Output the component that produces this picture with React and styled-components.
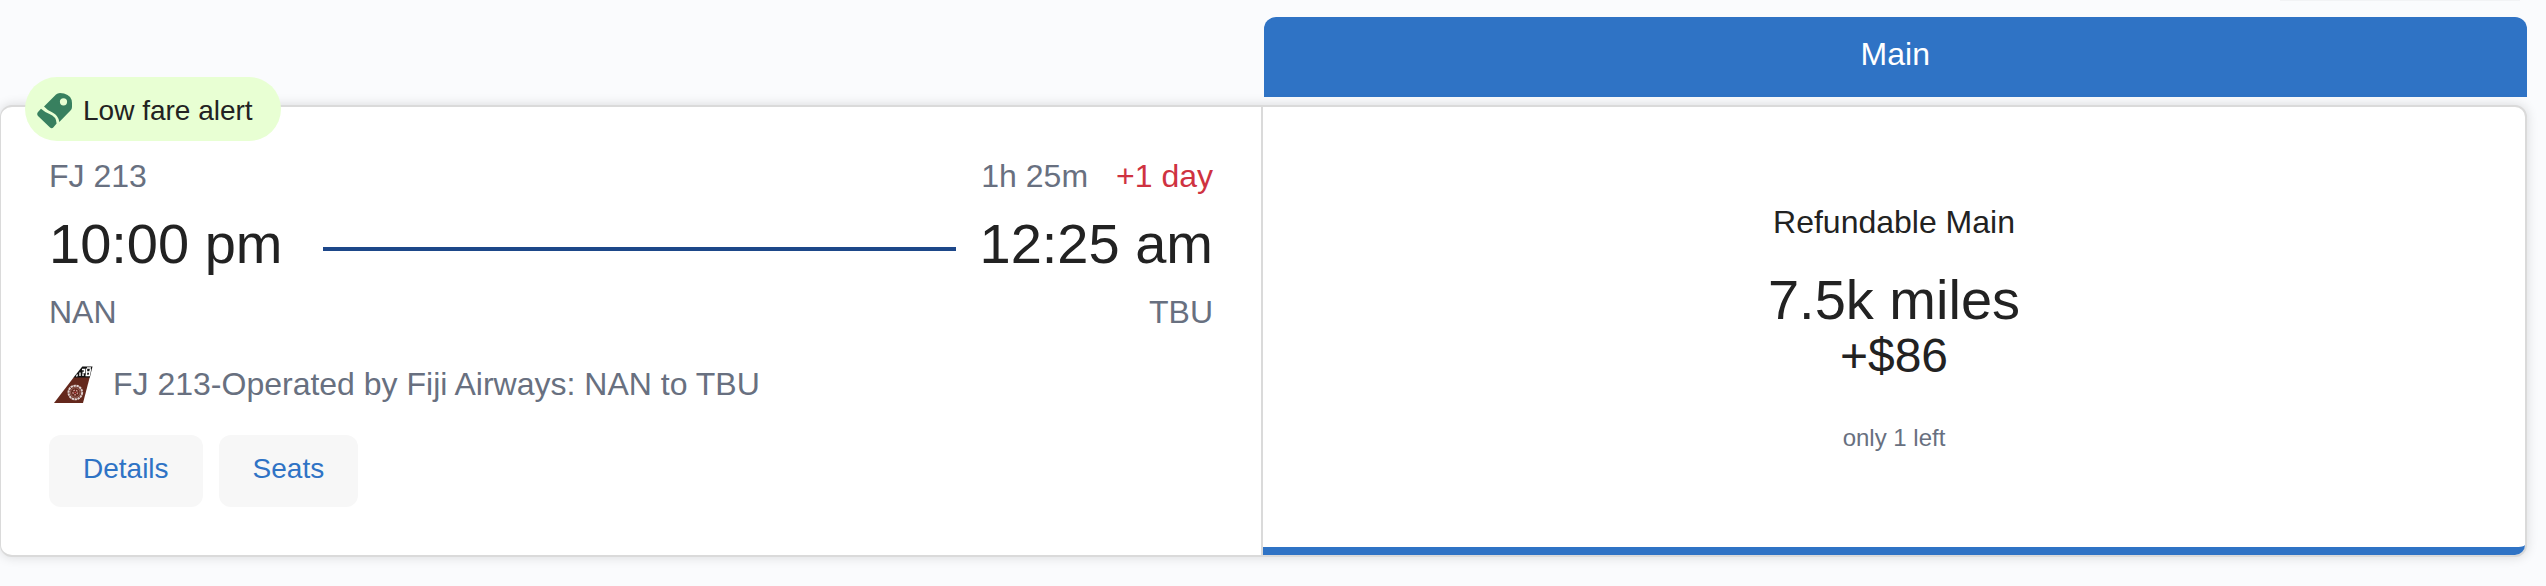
import React from "react";
import styled, { createGlobalStyle } from "styled-components";

const GlobalStyle = createGlobalStyle`
  * {
    box-sizing: border-box;
  }

  body {
    margin: 0;
    background-color: #fafbfd;
    color: #222;
    font-family: "Liberation Sans", Arial, sans-serif;
  }
`;

const Page = styled.main`
  padding: 0 19px 29px 0;
`;

const PanelEdge = styled.div`
  width: 240px;
  height: 1px;
  margin: 0 7px 16px auto;
  background-color: #f2f3f5;
`;

const FareHeader = styled.header`
  display: grid;
  grid-template-columns: 1fr 1fr;
  margin-bottom: 8px;
`;

const FareClass = styled.h2`
  grid-column: 2;
  margin: 0;
  padding: 13px 16px 19px;
  border-radius: 12px 12px 0 0;
  background-color: #2f73c5;
  color: #fff;
  font-size: 32px;
  font-weight: 400;
  line-height: 48px;
  text-align: center;
`;

const Card = styled.article`
  position: relative;
  display: grid;
  grid-template-columns: 1fr 1fr;
  border: 2px solid #dadada;
  border-left-width: 1px;
  border-radius: 12px;
  background-color: #fff;
  box-shadow: 0 0 12px rgba(0, 0, 0, 0.14);
`;

const Badge = styled.div`
  position: absolute;
  top: -30px;
  left: 24px;
  display: flex;
  align-items: center;
  gap: 10px;
  height: 64px;
  padding: 4px 28px 0 12px;
  border-radius: 32px;
  background-color: #e8ffd3;
  font-size: 28px;
  line-height: 32px;
`;

const Flight = styled.section`
  padding: 49px 48px 48px;
  border-right: 2px solid #dadada;
`;

const Row = styled.div`
  display: flex;
  justify-content: space-between;
  color: #687080;
  font-size: 32px;
  line-height: 40px;
`;

const Duration = styled.div`
  display: flex;
  gap: 28px;
`;

const NextDay = styled.span`
  color: #cf3241;
`;

const Times = styled.div`
  display: flex;
  align-items: center;
  margin: 16px 0;
  font-size: 56px;
  line-height: 64px;
`;

const Route = styled.div`
  flex: 1;
  height: 4px;
  margin: 10px 24px 0 40px;
  background-color: #1d4789;
`;

const Operator = styled.div`
  display: flex;
  align-items: center;
  gap: 16px;
  margin: 32px 0 31px;
  color: #687080;
  font-size: 32px;
  line-height: 40px;
`;

const Actions = styled.div`
  display: flex;
  gap: 16px;
`;

const Button = styled.button`
  height: 72px;
  padding: 0 34px 4px;
  border: 0;
  border-radius: 12px;
  background-color: #f7f7f7;
  color: #2f73c5;
  font-family: inherit;
  font-size: 28px;
  line-height: 32px;
  cursor: pointer;

  &:hover {
    background-color: #eee;
  }
`;

const Fare = styled.section`
  padding: 95px 48px 48px;
  border-bottom: 8px solid #2f73c5;
  border-bottom-right-radius: 10px;
  text-align: center;
`;

const FareName = styled.h3`
  margin: 0 0 30px;
  font-size: 32px;
  font-weight: 400;
  line-height: 40px;
`;

const Price = styled.div`
  font-size: ${(props) => (props.$small ? "48px" : "56px")};
  line-height: 56px;
`;

const SeatsLeft = styled.p`
  margin: 38px 0 0;
  color: #687080;
  font-size: 24px;
  line-height: 32px;
`;

const TagIcon = () => (
  <svg width="36" height="36" viewBox="0 0 36 36" fill="#38805f" aria-hidden="true">
    <path
      fillRule="evenodd"
      d="M7 13.5 19 1.5Q20.5 0 23 0L27 .4Q35 2.5 35 10V14Q35 16 33.5 17.5L22.3 29Q21.5 22.5 15.5 19.5 10.5 17.5 7 13.5ZM26.5 5.2a3.6 3.6 0 1 0 0 7.2 3.6 3.6 0 0 0 0-7.2Z"
    />
    <path d="M4 15.8Q7.5 19 12 20.7 19.5 23.5 19.6 30.5L16.5 34.3Q14.8 36 13 34.5L1 23Q-.6 21 1 19Z" />
  </svg>
);

const TailIcon = () => (
  <svg width="48" height="40" viewBox="0 0 48 40" aria-hidden="true">
    <path d="M5 39 25 13H40.8L34 39Z" fill="#64281c" />
    <path d="M24.5 13.5 33.3 2.5H43.5L40.8 13.5Z" fill="#111" />
    <path
      d="M33 5.5h2.5v3h-2M38 4h4M37.5 4.5v7M41.5 5l-1.3 7M37 8h4M36.5 11.5h4M31 8.5v3.5M34 9.5v2.5M28.5 10.5l-1 2"
      fill="none"
      stroke="#fff"
      strokeWidth="1.4"
    />
    <circle cx="26.3" cy="28.5" r="6.8" fill="none" stroke="#e0d2d0" strokeWidth="2" strokeDasharray="2.4 .6" />
    <circle cx="26.3" cy="28.5" r="4.8" fill="none" stroke="#b58880" strokeWidth=".7" />
    <circle cx="26.3" cy="28.5" r="2.3" fill="none" stroke="#d29b98" strokeWidth="1.3" strokeDasharray="1.6 1" />
    <circle cx="26.3" cy="28.5" r=".8" fill="#d74750" />
  </svg>
);

const App = () => (
  <>
    <GlobalStyle />
    <Page>
      <PanelEdge />
      <FareHeader>
        <FareClass>Main</FareClass>
      </FareHeader>
      <Card>
        <Badge>
          <TagIcon />
          <span>Low fare alert</span>
        </Badge>
        <Flight>
          <Row>
            <span>FJ 213</span>
            <Duration>
              <span>1h 25m</span>
              <NextDay>+1 day</NextDay>
            </Duration>
          </Row>
          <Times>
            <time dateTime="22:00">10:00 pm</time>
            <Route />
            <time dateTime="00:25">12:25 am</time>
          </Times>
          <Row>
            <span>NAN</span>
            <span>TBU</span>
          </Row>
          <Operator>
            <TailIcon />
            <span>FJ 213-Operated by Fiji Airways: NAN to TBU</span>
          </Operator>
          <Actions>
            <Button type="button">Details</Button>
            <Button type="button">Seats</Button>
          </Actions>
        </Flight>
        <Fare>
          <FareName>Refundable Main</FareName>
          <Price>7.5k miles</Price>
          <Price $small>+$86</Price>
          <SeatsLeft>only 1 left</SeatsLeft>
        </Fare>
      </Card>
    </Page>
  </>
);

export default App;
